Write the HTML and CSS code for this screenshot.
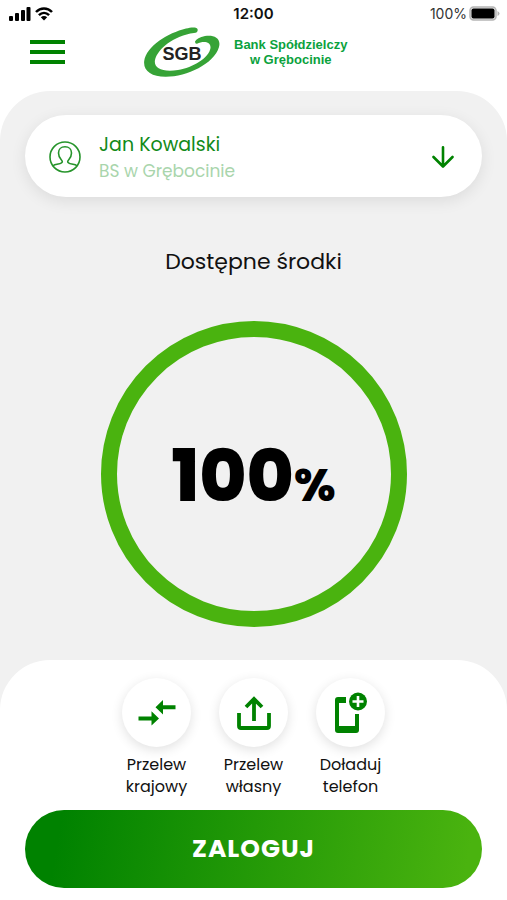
FILE: index.html
```html
<!DOCTYPE html>
<html lang="pl">
<head>
<meta charset="utf-8">
<meta name="viewport" content="width=device-width, initial-scale=1">
<title>SGB Bank Spółdzielczy w Grębocinie</title>
<link rel="stylesheet" href="styles.css">
</head>
<body>
<div class="status">
  <div class="status-side">
    <svg width="22" height="14" viewBox="0 0 22 14" aria-hidden="true">
      <rect x="0" y="9" width="4" height="5" rx="1"/><rect x="6" y="6" width="4" height="8" rx="1"/><rect x="12" y="3" width="4" height="11" rx="1"/><rect x="17.500" y="0" width="4" height="14" rx="1"/>
    </svg>
    <svg width="18" height="14" viewBox="0 0 18 14" aria-hidden="true">
      <path d="M1 5C5.600.300 12.400.300 17 5M3.900 8.200c3-2.900 7.200-2.900 10.200 0" fill="none" stroke="#000" stroke-width="2.500"/>
      <path d="M5.800 10.200c1.900-1.700 4.500-1.700 6.400 0L9 13.500z"/>
    </svg>
  </div>
  <span class="clock">12:00</span>
  <div class="status-side status-end">
    <span>100%</span>
    <svg width="31" height="15" viewBox="0 0 31 15" aria-hidden="true">
      <rect x="1" y="1" width="26" height="13" rx="3.500" fill="#e4e4e4" stroke="#b5b5b5" stroke-width="1.500"/>
      <rect x="2.500" y="2.500" width="23" height="10" rx="2"/><path d="M28.500 5v5q2-1 2-2.500T28.500 5z" fill="#b5b5b5"/>
    </svg>
  </div>
</div>
<header class="header">
  <button class="menu" type="button" aria-label="Menu">
    <svg width="35" height="24" viewBox="0 0 35 24"><path d="M0 2h35M0 12h35M0 22h35" stroke="#008200" stroke-width="3.800"/></svg>
  </button>
  <a class="brand" href="#">
    <svg class="logo" width="78" height="50" viewBox="0 0 78 50" role="img" aria-label="SGB">
      <path d="M54.500 2C53-.3 48 .3 43 1.500C25 6 3.500 19 1.200 34C0 44 9 50 23 49.800C44 49.500 71 37 76 20C78.500 10.500 70 7.500 62 9Q54 10.500 52 14.500Q52 17 54 16.700C60 14 68 14.200 67.500 21C66 31 50 40.500 35 43C19 45.500 10.500 41 12 33C14.500 22 31 8.500 51 6Q55.500 5.500 54.500 2z" fill="#36a336"/>
      <text class="logo-text" x="39" y="33" text-anchor="middle">SGB</text>
    </svg>
    <span class="brand-name">Bank Spółdzielczy<br>w Grębocinie</span>
  </a>
</header>
<main class="main">
  <button class="account" type="button">
    <svg class="avatar" width="32" height="32" viewBox="0 0 32 32" fill="none" stroke="#26942b" stroke-width="1.600" aria-hidden="true">
      <circle cx="16" cy="16" r="15"/>
      <path d="M3.500 25C7 22 13.300 24 13.300 20.500C13.200 18.500 9.500 17.500 9.500 12C9.500 8.300 12 5.800 16 5.800S22.500 8.300 22.500 12C22.500 17.500 18.800 18.500 18.700 20.500C18.700 24 25 22 28.500 25" stroke-linejoin="round"/>
    </svg>
    <span class="account-text"><span class="account-name">Jan Kowalski</span><span class="account-bank">BS w Grębocinie</span></span>
    <svg width="22" height="22" viewBox="0 0 22 22" fill="none" stroke="#008200" stroke-width="2.600" stroke-linecap="round" stroke-linejoin="round" aria-hidden="true"><path d="M11 1.300v19M1.500 11l9.500 9.500 9.500-9.500"/></svg>
  </button>
  <h1 class="caption">Dostępne środki</h1>
  <div class="ring"><span class="value">100<span class="percent">%</span></span></div>
  <section class="sheet">
    <div class="actions">
      <button class="action" type="button">
        <span class="disc"><svg width="38" height="26" viewBox="0 0 38 26" fill="#008200" aria-hidden="true"><path d="M25 0v5.300h12.500v4H25v5.200L17.500 7.300zM13.500 11.200l7.500 7.200-7.500 7.200v-5.200H.500v-4h13z"/></svg></span>
        <span>Przelew<br>krajowy</span>
      </button>
      <button class="action" type="button">
        <span class="disc"><svg width="34" height="34" viewBox="0 0 34 34" fill="none" stroke="#008200" stroke-width="3.800" aria-hidden="true"><path d="M17 25V3M9 11l8-8 8 8M2 17v13q0 2 2 2h26q2 0 2-2V17"/></svg></span>
        <span>Przelew<br>własny</span>
      </button>
      <button class="action" type="button">
        <span class="disc"><svg width="32" height="42" viewBox="2 0 32 42" aria-hidden="true"><path fill="#008200" fill-rule="evenodd" d="M5 5h8v6H6v23h16V22h4v16q0 3-3 3H5q-3 0-3-3V8q0-3 3-3z"/><circle cx="25" cy="9.500" r="9" fill="#008200"/><path d="M25 4v11M19.500 9.500h11" stroke="#fff" stroke-width="2.600"/></svg></span>
        <span>Doładuj<br>telefon</span>
      </button>
    </div>
    <button class="login" type="button">ZALOGUJ</button>
  </section>
</main>
</body>
</html>
```
FILE: styles.css
```css
* { box-sizing: border-box; }

body {
  margin: 0;
  min-height: 100vh;
  display: flex;
  flex-direction: column;
  background: #fff;
  color: #111;
  font-family: Poppins, Inter, sans-serif;
}

button {
  margin: 0;
  padding: 0;
  border: 0;
  background: none;
  color: inherit;
  font: inherit;
  cursor: pointer;
}

svg { display: block; flex: none; }

.status {
  display: grid;
  grid-template-columns: 1fr auto 1fr;
  align-items: center;
  height: 27px;
  padding: 0 7px;
  font: 14px/20px Inter, sans-serif;
}

.status-side { display: flex; align-items: center; gap: 4px; padding-left: 2px; }
.status-end { justify-content: flex-end; gap: 2px; color: #333; }
.clock { font-size: 15px; font-weight: 600; }

.header {
  display: grid;
  grid-template-columns: 113px 1fr;
  align-items: start;
  height: 64px;
  padding: 0 30px;
}

.menu { width: 35px; height: 50px; }

.brand {
  display: flex;
  align-items: center;
  gap: 13px;
  text-decoration: none;
}

.logo-text { font: 700 18px "Liberation Sans", sans-serif; fill: #222; }

.brand-name {
  color: #0ba23d;
  font: 700 13px/15px "Liberation Sans", sans-serif;
  text-align: center;
}

.main {
  flex: 1;
  display: flex;
  flex-direction: column;
  align-items: center;
  padding-top: 24px;
  border-radius: 50px 50px 0 0;
  background: #f1f1f1;
}

.account {
  display: flex;
  align-items: center;
  align-self: stretch;
  height: 82px;
  margin: 0 25px;
  padding: 2px 28px 0 24px;
  border-radius: 41px;
  background: #fff;
  box-shadow: 0 4px 16px rgba(0, 0, 0, 0.09);
  text-align: left;
}

.account-text {
  flex: 1;
  display: flex;
  flex-direction: column;
  margin-left: 18px;
  padding-top: 2px;
  line-height: 27px;
}

.account-name { color: #128a18; font-size: 19px; }
.account-bank { color: #a9d5ac; font-size: 17px; }

.caption {
  margin: 49px 0 43px;
  font-size: 22px;
  font-weight: 400;
  line-height: 32px;
}

.ring {
  display: flex;
  align-items: center;
  justify-content: center;
  width: 306px;
  height: 306px;
  padding-top: 12px;
  border: 16px solid #4ab30f;
  border-radius: 50%;
}

.value { color: #000; font-size: 72px; font-weight: 800; line-height: 80px; }
.percent { font-size: 46px; }

.sheet {
  align-self: stretch;
  flex: 1;
  margin-top: 33px;
  padding: 18px 25px 12px;
  border-radius: 50px 50px 0 0;
  background: #fff;
}

.actions { display: flex; justify-content: center; gap: 12px; }

.action {
  display: flex;
  flex-direction: column;
  align-items: center;
  gap: 7px;
  width: 85px;
  font-size: 16px;
  line-height: 22px;
}

.disc {
  display: flex;
  align-items: center;
  justify-content: center;
  width: 69px;
  height: 69px;
  border-radius: 50%;
  background: #fff;
  box-shadow: 0 3px 12px rgba(0, 0, 0, 0.12);
}

.login {
  width: 100%;
  height: 78px;
  margin-top: 12px;
  border-radius: 39px;
  background: linear-gradient(100deg, #008200 8%, #4ab30f 96%);
  color: #fff;
  font-size: 25px;
  font-weight: 700;
  letter-spacing: 1px;
}
```
